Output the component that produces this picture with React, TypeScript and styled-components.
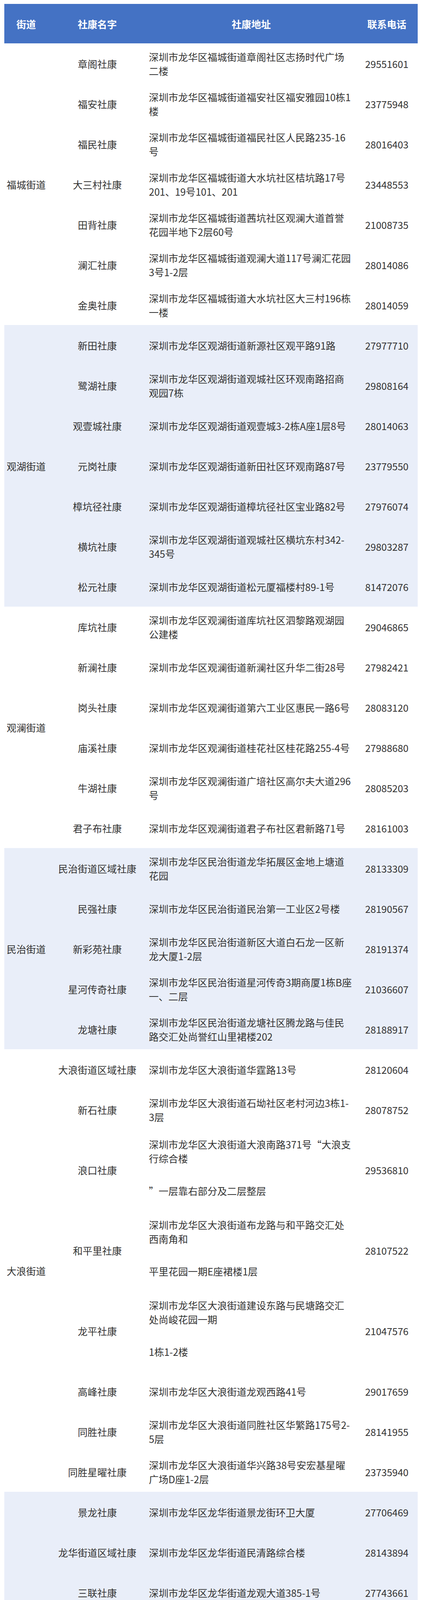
import styled, { createGlobalStyle } from "styled-components";

type Clinic = {
    name: string;
    address: string[];
    phone: string;
    tall?: boolean;
};

type District = {
    name: string;
    clinics: Clinic[];
};

// each address entry is a paragraph; "\n" is a line break inside it
const districts: District[] = [
    {
        name: "福城街道",
        clinics: [
            { name: "章阁社康", address: ["深圳市龙华区福城街道章阁社区志扬时代广场\n二楼"], phone: "29551601" },
            { name: "福安社康", address: ["深圳市龙华区福城街道福安社区福安雅园10栋1\n楼"], phone: "23775948" },
            { name: "福民社康", address: ["深圳市龙华区福城街道福民社区人民路235-16\n号"], phone: "28016403" },
            { name: "大三村社康", address: ["深圳市龙华区福城街道大水坑社区桔坑路17号\n201、19号101、201"], phone: "23448553" },
            { name: "田背社康", address: ["深圳市龙华区福城街道茜坑社区观澜大道首誉\n花园半地下2层60号"], phone: "21008735" },
            { name: "澜汇社康", address: ["深圳市龙华区福城街道观澜大道117号澜汇花园\n3号1-2层"], phone: "28014086" },
            { name: "金奥社康", address: ["深圳市龙华区福城街道大水坑社区大三村196栋\n一楼"], phone: "28014059" },
        ],
    },
    {
        name: "观湖街道",
        clinics: [
            { name: "新田社康", address: ["深圳市龙华区观湖街道新源社区观平路91路"], phone: "27977710" },
            { name: "鹭湖社康", address: ["深圳市龙华区观湖街道观城社区环观南路招商\n观园7栋"], phone: "29808164" },
            { name: "观壹城社康", address: ["深圳市龙华区观湖街道观壹城3-2栋A座1层8号"], phone: "28014063" },
            { name: "元岗社康", address: ["深圳市龙华区观湖街道新田社区环观南路87号"], phone: "23779550" },
            { name: "樟坑径社康", address: ["深圳市龙华区观湖街道樟坑径社区宝业路82号"], phone: "27976074" },
            { name: "横坑社康", address: ["深圳市龙华区观湖街道观城社区横坑东村342-\n345号"], phone: "29803287" },
            { name: "松元社康", address: ["深圳市龙华区观湖街道松元厦福楼村89-1号"], phone: "81472076" },
        ],
    },
    {
        name: "观澜街道",
        clinics: [
            { name: "库坑社康", address: ["深圳市龙华区观澜街道库坑社区泗黎路观湖园\n公建楼"], phone: "29046865" },
            { name: "新澜社康", address: ["深圳市龙华区观澜街道新澜社区升华二街28号"], phone: "27982421" },
            { name: "岗头社康", address: ["深圳市龙华区观澜街道第六工业区惠民一路6号"], phone: "28083120" },
            { name: "庙溪社康", address: ["深圳市龙华区观澜街道桂花社区桂花路255-4号"], phone: "27988680" },
            { name: "牛湖社康", address: ["深圳市龙华区观澜街道广培社区高尔夫大道296\n号"], phone: "28085203" },
            { name: "君子布社康", address: ["深圳市龙华区观澜街道君子布社区君新路71号"], phone: "28161003" },
        ],
    },
    {
        name: "民治街道",
        clinics: [
            { name: "民治街道区域社康", address: ["深圳市龙华区民治街道龙华拓展区金地上塘道\n花园"], phone: "28133309" },
            { name: "民强社康", address: ["深圳市龙华区民治街道民治第一工业区2号楼"], phone: "28190567" },
            { name: "新彩苑社康", address: ["深圳市龙华区民治街道新区大道白石龙一区新\n龙大厦1-2层"], phone: "28191374" },
            { name: "星河传奇社康", address: ["深圳市龙华区民治街道星河传奇3期商厦1栋B座\n一、二层"], phone: "21036607" },
            { name: "龙塘社康", address: ["深圳市龙华区民治街道龙塘社区腾龙路与佳民\n路交汇处尚誉红山里裙楼202"], phone: "28188917" },
        ],
    },
    {
        name: "大浪街道",
        clinics: [
            { name: "大浪街道区域社康", address: ["深圳市龙华区大浪街道华霆路13号"], phone: "28120604" },
            { name: "新石社康", address: ["深圳市龙华区大浪街道石坳社区老村河边3栋1-\n3层"], phone: "28078752" },
            {
                name: "浪口社康",
                address: ["深圳市龙华区大浪街道大浪南路371号“大浪支\n行综合楼", "”一层靠右部分及二层整层"],
                phone: "29536810",
                tall: true,
            },
            {
                name: "和平里社康",
                address: ["深圳市龙华区大浪街道布龙路与和平路交汇处\n西南角和", "平里花园一期E座裙楼1层"],
                phone: "28107522",
                tall: true,
            },
            {
                name: "龙平社康",
                address: ["深圳市龙华区大浪街道建设东路与民塘路交汇\n处尚峻花园一期", "1栋1-2楼"],
                phone: "21047576",
                tall: true,
            },
            { name: "高峰社康", address: ["深圳市龙华区大浪街道龙观西路41号"], phone: "29017659" },
            { name: "同胜社康", address: ["深圳市龙华区大浪街道同胜社区华繁路175号2-\n5层"], phone: "28141955" },
            { name: "同胜星曜社康", address: ["深圳市龙华区大浪街道华兴路38号安宏基星曜\n广场D座1-2层"], phone: "23735940" },
        ],
    },
    {
        name: "龙华街道",
        clinics: [
            { name: "景龙社康", address: ["深圳市龙华区龙华街道景龙街环卫大厦"], phone: "27706469" },
            { name: "龙华街道区域社康", address: ["深圳市龙华区龙华街道民清路综合楼"], phone: "28143894" },
            { name: "三联社康", address: ["深圳市龙华区龙华街道龙观大道385-1号"], phone: "27743661" },
            { name: "和联社康", address: ["深圳市龙华区龙华街道东环一路595号奋斗者广\n场201"], phone: "28188626" },
            { name: "壹成社康", address: ["深圳市龙华区龙华街道人民路壹成中心花园9区\n6栋一、二层"], phone: "21011207" },
            { name: "景新社康", address: ["深圳市龙华区龙华街道鸿荣路与鸿创路交汇处\n壹成中心11区璞誉府2B栋07、10商铺"], phone: "28026873" },
            { name: "华联社康", address: ["深圳市龙华区龙华街道大浪南路新城市花园3栋\n大浪南路72-1号一、二层"], phone: "23731036" },
            { name: "深圳蓝生脑科医院", address: ["深圳市龙华区龙华街道龙观大道360号"], phone: "61119999" },
        ],
    },
];

export default function App() {
    return (
        <>
            <GlobalStyle />
            <Page>
                <Table>
                    <HeaderRow>
                        <HeaderCell>街道</HeaderCell>
                        <HeaderCell>社康名字</HeaderCell>
                        <HeaderCell>社康地址</HeaderCell>
                        <HeaderCell>联系电话</HeaderCell>
                    </HeaderRow>
                    {districts.map((district, index) => (
                        <Section key={district.name} $banded={index % 2 === 1}>
                            <DistrictCell>{district.name}</DistrictCell>
                            <Rows>
                                {district.clinics.map((clinic) => (
                                    <Row key={clinic.name} $tall={!!clinic.tall}>
                                        <NameCell>{clinic.name}</NameCell>
                                        <AddressCell $tall={!!clinic.tall}>
                                            {clinic.address.map((para) => (
                                                <Paragraph key={para}>{para}</Paragraph>
                                            ))}
                                        </AddressCell>
                                        <PhoneCell>{clinic.phone}</PhoneCell>
                                    </Row>
                                ))}
                            </Rows>
                        </Section>
                    ))}
                </Table>
            </Page>
        </>
    );
}

const GlobalStyle = createGlobalStyle`
    html, body {
        margin: 0;
        padding: 0;
        background: #ffffff;
    }
    body {
        font-family: "Noto Sans CJK SC", "Noto Sans", sans-serif;
        color: #333333;
    }
`;

const Page = styled.div`
    padding: 10px 11px 9px;
    width: 1080px;
    box-sizing: border-box;
`;

const Table = styled.div`
    width: 1058px;
    display: flex;
    flex-direction: column;
    border-bottom: 2px solid #a4a7ad;
`;

const HeaderRow = styled.div`
    display: grid;
    grid-template-columns: 112px 252px 536px 158px;
    height: 101px;
    background-color: #4472c4;
    align-items: center;
`;

const HeaderCell = styled.div`
    text-align: center;
    color: #ffffff;
    font-size: 25px;
    font-weight: bold;
`;

const Section = styled.div<{ $banded: boolean }>`
    display: grid;
    grid-template-columns: 112px 1fr;
    background-color: ${(p) => (p.$banded ? "#e9eef9" : "#ffffff")};
`;

const DistrictCell = styled.div`
    display: flex;
    align-items: center;
    justify-content: center;
    font-size: 25px;
    color: #333333;
`;

const Rows = styled.div`
    display: flex;
    flex-direction: column;
`;

const Row = styled.div<{ $tall: boolean }>`
    display: grid;
    grid-template-columns: 252px 536px 158px;
    height: ${(p) => (p.$tall ? "206px" : "103px")};
    align-items: center;
    font-size: 25px;
    color: #333333;
`;

const NameCell = styled.div`
    text-align: center;
    white-space: nowrap;
`;

const AddressCell = styled.div<{ $tall: boolean }>`
    display: flex;
    flex-direction: column;
    justify-content: center;
    padding-left: 6px;
    padding-bottom: ${(p) => (p.$tall ? "14px" : "0")};
    line-height: 36px;
`;

const Paragraph = styled.div`
    white-space: pre;

    & + & {
        margin-top: 47px;
    }
`;

const PhoneCell = styled.div`
    text-align: center;
`;
